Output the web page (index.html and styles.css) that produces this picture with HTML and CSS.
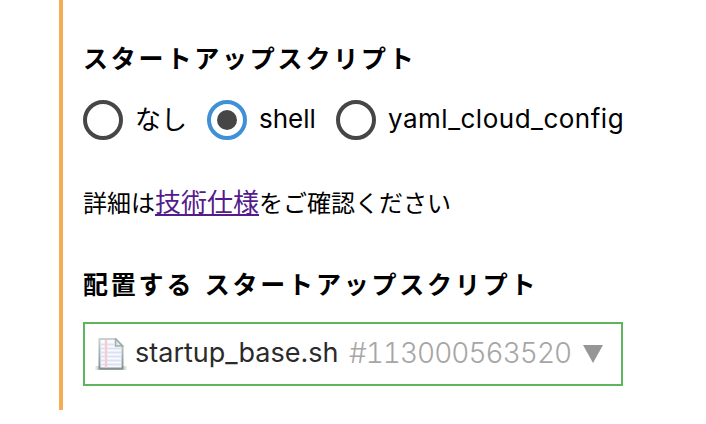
FILE: index.html
```html
<!DOCTYPE html>
<html lang="ja">
<head>
<meta charset="utf-8">
<title>スタートアップスクリプト</title>
<link rel="stylesheet" href="styles.css">
</head>
<body>
<main class="panel">
  <h2 class="heading">スタートアップスクリプト</h2>
  <div class="options">
    <label class="option"><span class="radio"></span><span class="none">なし</span></label>
    <label class="option"><span class="radio checked"></span><span class="shell">shell</span></label>
    <label class="option"><span class="radio"></span><span class="yaml">yaml_cloud_config</span></label>
  </div>
  <p class="note">詳細は<a href="#">技術仕様</a>をご確認ください</p>
  <h2 class="heading second">配置する スタートアップスクリプト</h2>
  <div class="select">
    <svg class="file" width="32" height="32" viewBox="0 0 32 32">
      <defs>
        <linearGradient id="edge" x1="0" y1="0" x2="0" y2="1"><stop offset="0" stop-color="#c6d3d0"/><stop offset="1" stop-color="#84928f"/></linearGradient>
        <linearGradient id="shade" x1="0" y1="0" x2="1" y2="0"><stop offset="0" stop-color="#889490" stop-opacity=".1"/><stop offset=".2" stop-color="#889490" stop-opacity=".75"/><stop offset=".8" stop-color="#889490" stop-opacity=".75"/><stop offset="1" stop-color="#889490" stop-opacity=".1"/></linearGradient>
      </defs>
      <path d="M0 28h32v4H0z" fill="url(#shade)"/>
      <path d="M4.500 1h16.500l6.500 7v22.500h-23z" fill="#fafbff" stroke="url(#edge)" stroke-width="2"/>
      <path d="M5.500 6.500h14M5.500 10.500h21M5.500 14.500h21M5.500 18.500h21M5.500 22.500h21M5.500 26.500h21" stroke="#dce1f4" stroke-width="2"/>
      <path d="M11 2v27.500" stroke="#f9cbd0" stroke-width="2.400"/>
      <path d="M20.500 1v7h7z" fill="#e1ebe8" stroke="#9eafab" stroke-width="1.500"/>
    </svg>
    <span class="filename">startup_base.sh</span>
    <span class="number">#113000563520</span>
    <svg class="arrow" width="20" height="18" viewBox="0 0 20 18"><path d="M0 0h20L10 18z" fill="#969696"/></svg>
  </div>
</main>
</body>
</html>
```
FILE: styles.css
```css
* { box-sizing: border-box; }
body {
  margin: 0;
  background: #fff;
  color: #000;
  font-family: Inter, "Noto Sans CJK JP", sans-serif;
}
.panel {
  width: 640px;
  height: 410px;
  margin-left: 59px;
  padding: 39px 0 0 20px;
  border-left: 4px solid #f4ad52;
}
.heading {
  margin: 0;
  height: 36px;
  font: bold 25px/36px "Noto Sans CJK JP", sans-serif;
  letter-spacing: 2.8px;
  white-space: nowrap;
}
.options {
  display: flex;
  height: 40px;
  margin-top: 25px;
}
.option {
  display: flex;
  align-items: center;
  font-size: 26px;
  line-height: 36px;
  white-space: nowrap;
}
.option:nth-child(1) { width: 124px; }
.option:nth-child(2) { width: 129px; }
.radio {
  flex: none;
  display: flex;
  align-items: center;
  justify-content: center;
  width: 40px;
  height: 40px;
  margin-right: 12px;
  border: 4px solid #464646;
  border-radius: 50%;
}
.radio.checked { border-color: #4090d8; }
.checked::after {
  content: "";
  width: 20px;
  height: 20px;
  border-radius: 50%;
  background: #464646;
}
.none, .shell, .yaml { padding-bottom: 3px; }
.none { font-family: "Noto Sans CJK JP", sans-serif; padding-bottom: 5px; }
.yaml { letter-spacing: 0.5px; }
.note {
  margin: 42px 0 0;
  height: 40px;
  font: 24px/40px "Noto Sans CJK JP", sans-serif;
  white-space: nowrap;
}
.note a {
  font-size: 26px;
  line-height: 1;
  color: #551a8b;
  text-underline-offset: 2px;
  text-decoration-thickness: 2px;
  text-decoration-skip-ink: none;
}
.second { margin-top: 43px; word-spacing: 2px; }
.select {
  display: flex;
  align-items: center;
  width: 540px;
  height: 64px;
  margin-top: 21px;
  padding: 0 10px;
  border: 2px solid #5fb55f;
  white-space: nowrap;
}
.file { flex: none; margin-right: 8px; }
.filename {
  width: 214px;
  padding-bottom: 3px;
  color: #2b2b2b;
  font-size: 27px;
}
.number {
  width: 234px;
  padding-bottom: 3px;
  color: #a6a6a6;
  font-size: 28px;
  font-weight: 300;
  font-variant-numeric: tabular-nums;
  letter-spacing: -1px;
}
.arrow { flex: none; }
```
